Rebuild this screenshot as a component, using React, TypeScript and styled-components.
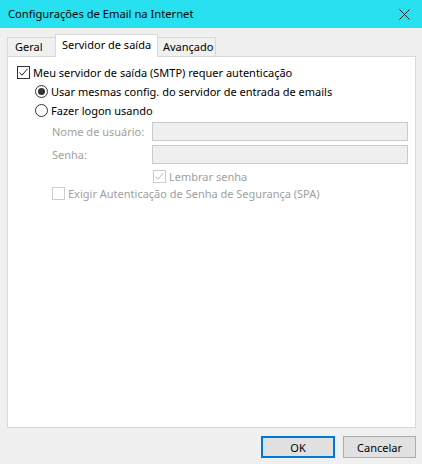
import React from "react";
import styled, { createGlobalStyle } from "styled-components";

const Global = createGlobalStyle`
  html, body { margin: 0; padding: 0; background: #f0f0f0; }
  body { font-family: "Noto Sans", "Open Sans", sans-serif; font-size: 11px; color: #000; }
`;

const Window = styled.div`
  width: 422px;
  height: 464px;
  display: flex;
  flex-direction: column;
  background: #f0f0f0;
  overflow: hidden;
`;

const TitleBar = styled.div`
  height: 28px;
  flex: none;
  background: #27e1f1;
  display: flex;
  align-items: center;
  justify-content: space-between;
  padding: 0 0 0 8px;
`;

const Title = styled.span`
  font-size: 11.2px;
  color: #000;
  margin-top: -2px;
`;

const CloseBtn = styled.div`
  width: 46px;
  height: 28px;
  display: flex;
  align-items: center;
  justify-content: center;
  margin-right: -5px;
`;

const Content = styled.div`
  flex: 1;
  display: flex;
  flex-direction: column;
  padding: 6px 6px 0 7px;
`;

const TabStrip = styled.div`
  display: flex;
  align-items: flex-end;
  height: 23px;
  position: relative;
  z-index: 1;
  margin-bottom: -1px;
`;

const Tab = styled.div<{ $active?: boolean; $w: number; $pl: number }>`
  box-sizing: border-box;
  width: ${(p) => p.$w}px;
  height: ${(p) => (p.$active ? 23 : 20)}px;
  padding-left: ${(p) => p.$pl}px;
  border: 1px solid #d9d9d9;
  border-bottom: ${(p) => (p.$active ? "none" : "1px solid #d9d9d9")};
  background: ${(p) => (p.$active ? "#fff" : "#f0f0f0")};
  display: flex;
  align-items: flex-start;
  padding-top: ${(p) => (p.$active ? "2px" : "1px")};
  position: relative;
  z-index: ${(p) => (p.$active ? 2 : 1)};
  line-height: 16px;
  white-space: nowrap;
  & + & {
    margin-left: -1px;
  }
`;

const Panel = styled.div`
  box-sizing: border-box;
  height: 372px;
  background: #fff;
  border: 1px solid #d9d9d9;
  padding: 6px 0 0 9px;
  display: flex;
  flex-direction: column;
`;

const Row = styled.label<{ $indent?: number; $disabled?: boolean; $gap?: number }>`
  display: flex;
  align-items: center;
  height: 19px;
  margin-top: ${(p) => p.$gap ?? 0}px;
  padding-left: ${(p) => p.$indent ?? 0}px;
  color: ${(p) => (p.$disabled ? "#a0a0a0" : "#000")};
  white-space: nowrap;
`;

const Box = styled.span<{ $disabled?: boolean }>`
  box-sizing: border-box;
  width: 13px;
  height: 13px;
  border: 1px solid ${(p) => (p.$disabled ? "#cccccc" : "#333333")};
  background: #fff;
  margin-right: 3px;
  display: inline-flex;
  align-items: center;
  justify-content: center;
  flex: none;
`;

const Radio = styled.span<{ $on?: boolean }>`
  box-sizing: border-box;
  width: 13px;
  height: 13px;
  border-radius: 50%;
  border: 1px solid #333;
  background: #fff;
  margin-right: 3px;
  display: inline-flex;
  align-items: center;
  justify-content: center;
  flex: none;
  &::after {
    content: "";
    display: ${(p) => (p.$on ? "block" : "none")};
    width: 7px;
    height: 7px;
    border-radius: 50%;
    background: #333;
  }
`;

const FieldRow = styled.div<{ $gap: number }>`
  display: flex;
  align-items: center;
  padding-left: 35px;
  margin-top: ${(p) => p.$gap}px;
  height: 19px;
`;

const FieldLabel = styled.span`
  width: 100px;
  color: #a0a0a0;
  flex: none;
  white-space: nowrap;
`;

const Input = styled.div`
  box-sizing: border-box;
  width: 256px;
  height: 19px;
  border: 1px solid #c5cbd0;
  background: #efefef;
`;

const Footer = styled.div`
  display: flex;
  justify-content: flex-end;
  gap: 8px;
  padding: 8px 0 0 0;
`;

const Button = styled.div<{ $default?: boolean }>`
  box-sizing: border-box;
  width: ${(p) => (p.$default ? 74 : 73)}px;
  height: 22px;
  display: flex;
  align-items: center;
  justify-content: center;
  background: #e1e1e1;
  border: ${(p) => (p.$default ? "2px solid #0078d7" : "1px solid #adadad")};
`;

const Check = ({ color }: { color: string }) => (
  <svg width="11" height="11" viewBox="0 0 11 11">
    <path d="M1.5 5.5 L4 8.2 L9.5 1.8" fill="none" stroke={color} strokeWidth="1" />
  </svg>
);

export default function App() {
  return (
    <Window>
      <Global />
      <TitleBar>
        <Title>Configurações de Email na Internet</Title>
        <CloseBtn>
          <svg width="11" height="11" viewBox="0 0 11 11">
            <path d="M0.5 0.5 L10.5 10.5 M10.5 0.5 L0.5 10.5" stroke="#111" strokeWidth="1" />
          </svg>
        </CloseBtn>
      </TitleBar>
      <Content>
        <TabStrip>
          <Tab $w={49} $pl={7}>Geral</Tab>
          <Tab $active $w={103} $pl={6}>Servidor de saída</Tab>
          <Tab $w={59} $pl={5}>Avançado</Tab>
        </TabStrip>
        <Panel>
          <Row>
            <Box>
              <Check color="#222" />
            </Box>
            Meu servidor de saída (SMTP) requer autenticação
          </Row>
          <Row $indent={18}>
            <Radio $on />
            Usar mesmas config. do servidor de entrada de emails
          </Row>
          <Row $indent={18}>
            <Radio />
            Fazer logon usando
          </Row>
          <FieldRow $gap={2}>
            <FieldLabel>Nome de usuário:</FieldLabel>
            <Input />
          </FieldRow>
          <FieldRow $gap={4}>
            <FieldLabel>Senha:</FieldLabel>
            <Input />
          </FieldRow>
          <Row $indent={136} $disabled $gap={3}>
            <Box $disabled>
              <Check color="#bbbbbb" />
            </Box>
            Lembrar senha
          </Row>
          <Row $indent={35} $disabled $gap={-2}>
            <Box $disabled />
            Exigir Autenticação de Senha de Segurança (SPA)
          </Row>
        </Panel>
        <Footer>
          <Button $default>OK</Button>
          <Button>Cancelar</Button>
        </Footer>
      </Content>
    </Window>
  );
}
